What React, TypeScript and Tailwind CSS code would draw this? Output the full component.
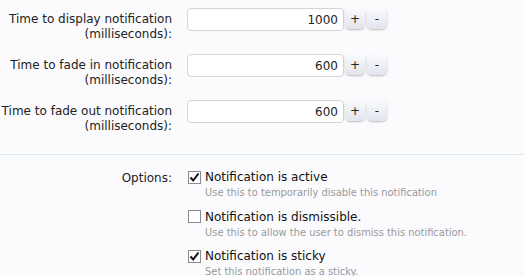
import React from 'react';

const font = { fontFamily: '"DejaVu Sans", Tahoma, sans-serif' };
const condensed = { fontFamily: '"DejaVu Sans Condensed", "DejaVu Sans", Tahoma, sans-serif' };

const SpinRow = ({ label, value }: { label: string; value: string }) => (
  <div className="flex items-start h-[46px]">
    <div className="w-[172px] text-right text-[12px] leading-[15px] text-[#222] pt-[12px]">
      {label}
      <br />
      (milliseconds):
    </div>
    <div className="ml-[15px] flex items-start pt-[8px]">
      <input
        readOnly
        value={value}
        className="w-[157px] h-[23px] bg-white border border-[#d4d4d8] rounded-[4px] text-right px-[5px] text-[12px] text-[#222] outline-none"
      />
      <button className="ml-[1px] w-[20px] h-[21px] rounded-[5px] bg-gradient-to-b from-[#fafbfe] to-[#e2e4ec] shadow-[0_1px_2px_rgba(0,0,0,0.25)] text-[12px] leading-[20px] text-[#222]">
        +
      </button>
      <button className="ml-[2px] w-[20px] h-[21px] rounded-[5px] bg-gradient-to-b from-[#fafbfe] to-[#e2e4ec] shadow-[0_1px_2px_rgba(0,0,0,0.25)] text-[12px] leading-[20px] text-[#222]">
        -
      </button>
    </div>
  </div>
);

const Check = ({ checked, title, hint }: { checked: boolean; title: string; hint: string }) => (
  <div className="h-[39.5px]">
    <div className="flex items-center">
      <span className="w-[13px] h-[13px] border border-[#8a8a8a] bg-white flex items-center justify-center">
        {checked && (
          <svg width="11" height="11" viewBox="0 0 11 11">
            <path d="M1.5 5.5 L4.2 8.5 L9.5 1.5" stroke="#111" strokeWidth="2" fill="none" />
          </svg>
        )}
      </span>
      <span className="ml-[4px] text-[12px] leading-[16px] text-[#111]">{title}</span>
    </div>
    <div className="ml-[17px] mt-[1px] text-[11px] leading-[14px] text-[#999]" style={condensed}>
      {hint}
    </div>
  </div>
);

export default function App() {
  return (
    <div className="w-[524px] h-[276px] bg-[#fbfbfe] overflow-hidden" style={font}>
      <SpinRow label="Time to display notification" value="1000" />
      <SpinRow label="Time to fade in notification" value="600" />
      <SpinRow label="Time to fade out notification" value="600" />
      <div className="mt-[16px] border-t border-[#d9ecec]" />
      <div className="flex pt-[14px]">
        <div className="w-[172px] text-right text-[12px] leading-[16px] text-[#222] pt-[1px]">Options:</div>
        <div className="ml-[16px]">
          <Check checked title="Notification is active" hint="Use this to temporarily disable this notification" />
          <Check checked={false} title="Notification is dismissible." hint="Use this to allow the user to dismiss this notification." />
          <Check checked title="Notification is sticky" hint="Set this notification as a sticky." />
        </div>
      </div>
    </div>
  );
}
